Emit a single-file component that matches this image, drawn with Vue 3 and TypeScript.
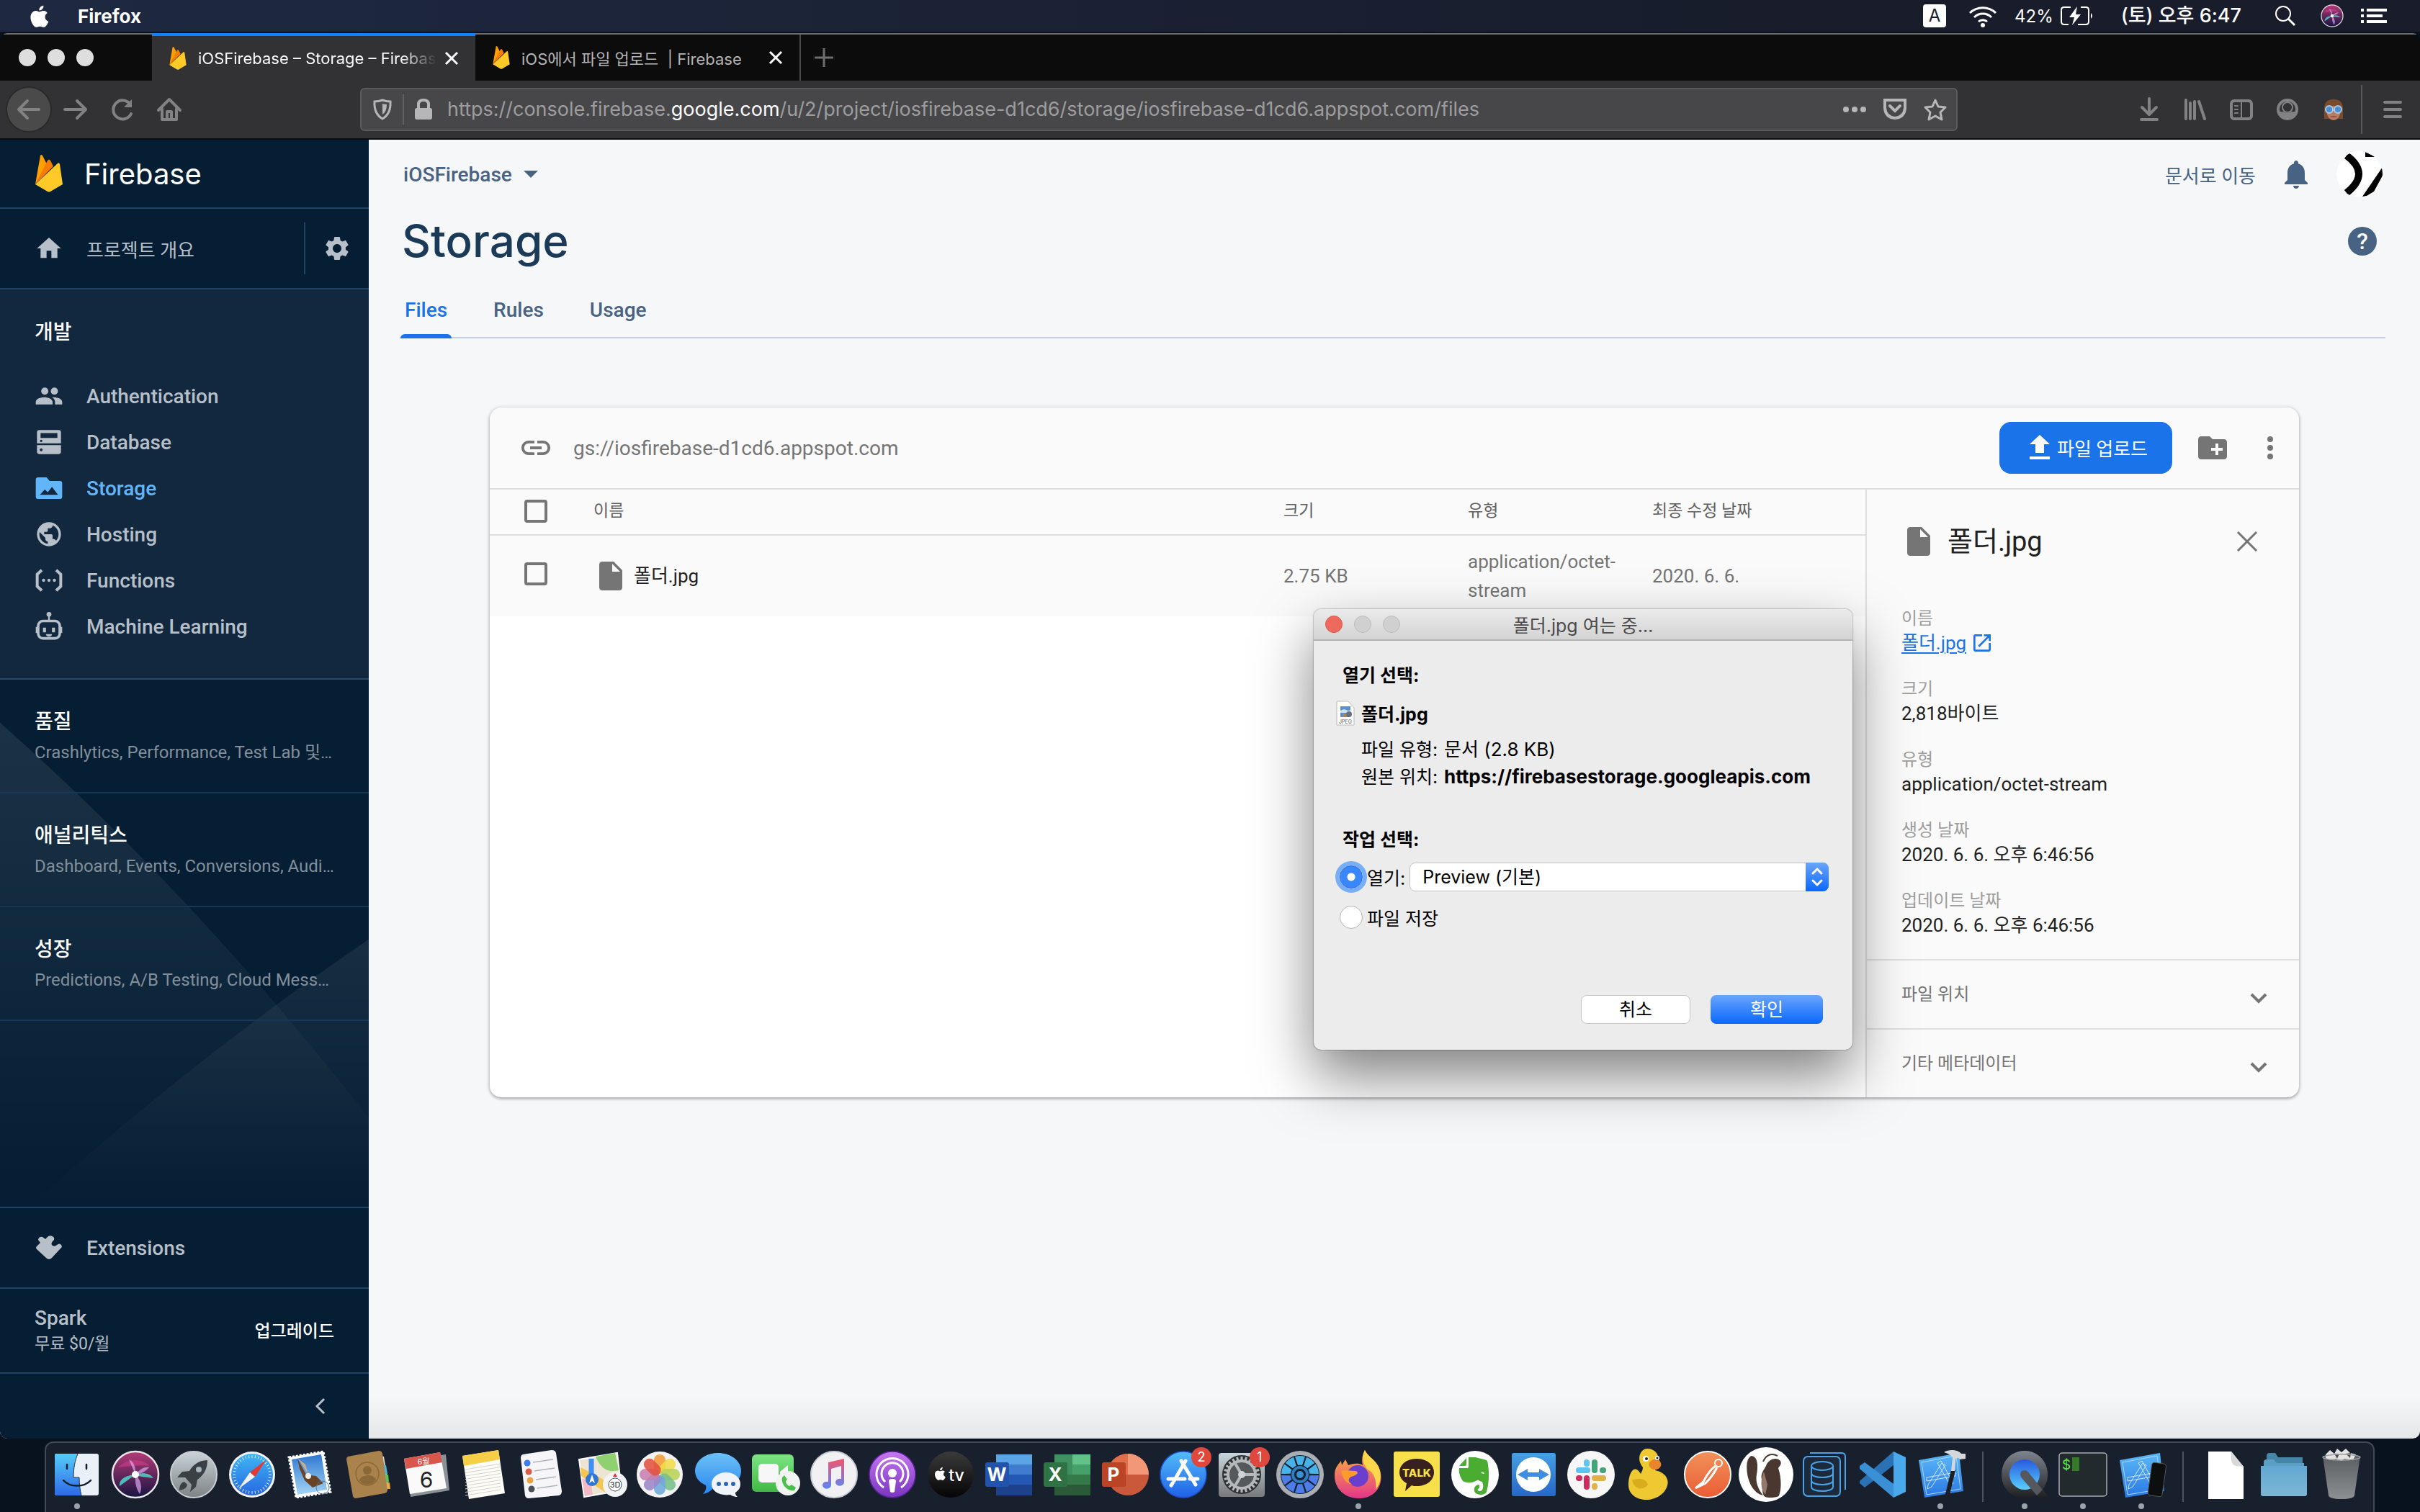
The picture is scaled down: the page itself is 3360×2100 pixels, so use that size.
<script setup lang="ts">
import { ref } from 'vue'

interface NavItem {
  label: string
  icon: string
  active?: boolean
}

interface DockApp {
  name: string
  art: string
  running?: boolean
  badge?: number
}

const navItems: NavItem[] = [
  { label: 'Authentication', icon: '<path d="M16.5 11a3 3 0 1 0 0-6 3 3 0 0 0 0 6zm-8 0a3 3 0 1 0 0-6 3 3 0 0 0 0 6zM8 13c-3 0-7 1.2-7 4v2h14v-2c0-2.8-4-4-7-4zm8 0h-1.5c1.5.9 2.5 2 2.5 4v2h6v-2c0-2.8-4-4-7-4z"/>' },
  { label: 'Database', icon: '<path fill-rule="evenodd" d="M4 2h16a2 2 0 0 1 2 2v9H2V4a2 2 0 0 1 2-2zm1 2.5v4h14v-4zM5.500 10a1 1 0 1 0 0 2 1 1 0 0 0 0-2zM2 14.5h20V20a2 2 0 0 1-2 2H4a2 2 0 0 1-2-2zM5.500 17.300a1.200 1.200 0 1 0 0 2.400 1.200 1.200 0 0 0 0-2.400z"/>' },
  { label: 'Storage', active: true, icon: '<path fill-rule="evenodd" d="M3 3h7l2.500 3H21a2 2 0 0 1 2 2v11a2 2 0 0 1-2 2H3a2 2 0 0 1-2-2V5a2 2 0 0 1 2-2zm1.500 14.500h15L14.500 11l-3.500 4.500L8.500 13z"/>' },
  { label: 'Hosting', icon: '<path d="M12 2C6.480 2 2 6.480 2 12s4.480 10 10 10 10-4.480 10-10S17.520 2 12 2zm-1 17.930c-3.950-.490-7-3.850-7-7.930 0-.620.080-1.210.210-1.790L9 15v1c0 1.100.900 2 2 2v1.930zm6.900-2.540c-.260-.810-1-1.390-1.900-1.390h-1v-3c0-.550-.450-1-1-1H8v-2h2c.550 0 1-.450 1-1V7h2c1.100 0 2-.900 2-2v-.410c2.930 1.190 5 4.060 5 7.410 0 2.080-.800 3.970-2.100 5.390z"/>' },
  { label: 'Functions', icon: '<path d="M6 3.500 2.200 7v10L6 20.500M18 3.500 21.800 7v10L18 20.500" fill="none" stroke="currentColor" stroke-width="2.400"/><circle cx="7.500" cy="12" r="1.300"/><circle cx="12" cy="12" r="1.300"/><circle cx="16.500" cy="12" r="1.300"/>' },
  { label: 'Machine Learning', icon: '<rect x="3" y="7.500" width="18" height="14.500" rx="4" fill="none" stroke="currentColor" stroke-width="2.200"/><path d="M1 12.500h2v5H1zM21 12.500h2v5h-2zM11.300 3h1.400v4h-1.400zM7 13h2.500v4H7zM14.500 13H17v4h-2.500zM9.500 18.500h5a2.500 2 0 0 1-5 0z"/><circle cx="12" cy="2" r="2"/>' },
]

const productGroups = [
  { title: '품질', detail: 'Crashlytics, Performance, Test Lab 및…' },
  { title: '애널리틱스', detail: 'Dashboard, Events, Conversions, Audi…' },
  { title: '성장', detail: 'Predictions, A/B Testing, Cloud Mess…' },
]

const pageTabs = ['Files', 'Rules', 'Usage']
const activeTab = ref('Files')
const openMode = ref('open')

const metadata = [
  { label: '크기', value: '2,818바이트' },
  { label: '유형', value: 'application/octet-stream' },
  { label: '생성 날짜', value: '2020. 6. 6. 오후 6:46:56' },
  { label: '업데이트 날짜', value: '2020. 6. 6. 오후 6:46:56' },
]

const repeat = (count: number, draw: (i: number) => string) =>
  Array.from({ length: count }, (_, i) => draw(i)).join('')

const petals = ['#f29b38', '#f3dc4a', '#b9d25a', '#78c08a', '#6fa8dc', '#9c86c9', '#c87fae', '#e2523f']
const applePath = 'M17 12.500c0-2.200 1.800-3.300 1.900-3.400-1-1.500-2.600-1.700-3.200-1.700-1.400-.100-2.700.800-3.300.800-.700 0-1.800-.800-2.900-.800-1.500 0-2.900.900-3.700 2.200-1.600 2.700-.400 6.800 1.100 9 .800 1.100 1.700 2.300 2.900 2.300 1.100 0 1.600-.700 3-.700s1.800.700 3 .700 2-1.100 2.800-2.200c.900-1.300 1.200-2.500 1.200-2.600-.100 0-2.800-1-2.800-3.600zM14.800 5.900c.600-.800 1-1.800.900-2.900-.900 0-2 .600-2.600 1.300-.600.700-1.100 1.700-.900 2.800 1 .100 2-.500 2.600-1.200z'
const blueprint = '<path d="M4 14 60 4l6 53-54 9z" fill="url(#g-blueprint)"/><path d="M8 17 56 8l6 46-47 8z" fill="none" stroke="#a9d6ff" stroke-width="1"/><path d="m17 48 19-30 5 3-19 30-6 3zM30 18l5-3 17 31-4 3zM15 38l40-7v5l-40 7z" fill="none" stroke="#cfe8ff" stroke-width="1"/>'
const officeTile = (letter: string, color: string) =>
  `<rect x="1" y="17" width="33" height="34" rx="3" fill="${color}"/><text x="17" y="43" font-size="26" font-weight="700" text-anchor="middle" fill="#fff">${letter}</text>`

const mainApps: DockApp[] = [
  { name: 'Finder', running: true, art: '<rect x="3" y="5" width="61" height="58" rx="3" fill="#e9f0f8"/><path d="M6 5h29c-4 10-6 20-6 33h8c0 9 1 17 3 25H6a3 3 0 0 1-3-3V8a3 3 0 0 1 3-3z" fill="url(#g-finder)"/><path d="M35 5c-4 10-6 20-6 33h8c0 9 1 17 3 25" fill="none" stroke="#234" stroke-width="1"/><path d="M20 20v6M47 20v6M15 42c9 10 29 10 38 0" fill="none" stroke="#111c2c" stroke-width="2.500" stroke-linecap="round"/>' },
  { name: 'Siri', art: '<circle cx="34" cy="34" r="32" fill="url(#g-siri)" stroke="#e9e6e8" stroke-width="2.500"/><path d="M10 24c14-14 34-12 44-2-14-2-28 0-44 2z" fill="#e0408f" opacity=".5"/><path d="M34 34 12 50c-1-9 8-15 22-16zM34 34c12-4 21-1 25 5-10-2-18-1-25-5z" fill="#4fe0d0" opacity=".8"/><path d="M34 34 25 13c7 3 10 12 9 21zM34 34c8 8 10 18 6 27-5-7-7-16-6-27zM34 34c6-8 13-11 19-10-4 5-10 9-19 10z" fill="#d8a8ef" opacity=".7"/><circle cx="34" cy="34" r="5" fill="#fff"/>' },
  { name: 'Launchpad', art: '<circle cx="34" cy="34" r="32" fill="url(#g-launch)" stroke="#c8d0d4" stroke-width="2"/><path d="M53 14c-11 0-20 6-25 15l-10 1-7 8h11l9 10-2 10 8-7 2-10c9-6 14-15 14-27z" fill="#3b4045"/><circle cx="41" cy="27" r="4" fill="#a9b4ba"/><path d="M21 44c-5 1-7 6-7 12 6-1 10-3 11-8z" fill="#3b4045"/>' },
  { name: 'Safari', art: `<circle cx="34" cy="34" r="32" fill="#f1f3f5"/><circle cx="34" cy="34" r="29" fill="url(#g-safari)"/>${repeat(36, i => `<path d="M34 7v4" stroke="#d6ecff" stroke-width="1" transform="rotate(${i * 10} 34 34)"/>`)}<path d="m54 13-16 24-7-6z" fill="#e5392f"/><path d="m15 54 16-23 7 6z" fill="#f4f4f4"/>` },
  { name: 'Mail', art: '<path d="m4 10 48-8 10 56-48 8z" fill="#fff" stroke="#fff" stroke-width="3" stroke-dasharray="3 2"/><path d="m8 13 41-7 8 49-41 7z" fill="url(#g-mail)"/><path d="m16 12 12 22 14 2 10 10-15 6-11-10-7-16z" fill="#6a4325"/><path d="m17 12 10 8 4 14z" fill="#c9b08c"/><circle cx="31" cy="36" r="4" fill="#f1eee8"/><circle cx="51" cy="52" r="9" fill="none" stroke="#55799b" stroke-width="1"/>' },
  { name: 'Contacts', art: '<path d="m50 8 5 1 7 44-6 4z" fill="#ddd"/><path d="m54 20 4 1 2 12-4 1z" fill="#4fb7e0"/><path d="m57 34 4 0 1 10-4 1z" fill="#58c757"/><path d="m59 45 4 0 1 9-4 0z" fill="#f0a63a"/><path d="M5 9 48 1q4 0 5 4l7 50q0 4-4 5L16 67q-3 0-4-3L3 13q0-3 2-4z" fill="#a9824c"/><circle cx="32" cy="33" r="16" fill="none" stroke="#8b6838" stroke-width="1.500"/><circle cx="32" cy="28" r="6" fill="#8b6838"/><path d="M21 42c2-9 20-9 23-1-6 9-18 9-23 1z" fill="#8b6838"/>' },
  { name: 'Calendar', art: '<path d="m8 14 53-8 5 50-54 9z" fill="#8c9196"/><path d="m3 12 50-9 9 50-51 8z" fill="#fafafa"/><path d="m3 12 50-9 3 14-50 9z" fill="#d9564d"/><text x="30" y="20" font-size="11" fill="#fff" text-anchor="middle">6월</text><text x="34" y="52" font-size="30" fill="#222" text-anchor="middle">6</text>' },
  { name: 'Notes', art: `<path d="m3 8 50-8 9 60-50 8z" fill="#fdfcf6"/><path d="m3 8 50-8 2 13-50 9z" fill="#f6cf46"/>${repeat(9, i => `<path d="m7 ${27 + i * 4.5} 49-8" stroke="#d5d5d0" stroke-width="1"/>`)}` },
  { name: 'Reminders', art: `<path d="M6 6 46 0q5 0 6 4l8 53q0 5-4 6L14 67q-4 0-5-4L3 11q0-4 3-5z" fill="#f6f6f8"/>${['#3b7cf0', '#dd5a4a', '#eca347', '#4b5158'].map((c, i) => `<circle cx="${12 + i * 2}" cy="${18 + i * 12}" r="4.500" fill="${c}"/><path d="m${20 + i * 2} ${17 + i * 12} 28-4" stroke="#b0b3b7" stroke-width="1.500"/>`).join('')}` },
  { name: 'Maps', art: '<path d="m3 13 53-9 6 52-52 9z" fill="#ece5d4" stroke="#fff" stroke-width="2"/><path d="m26 9 27-5 5 24c-16 4-25-3-32-19z" fill="#8fd071"/><path d="m5 24 20 10 36 22-20 4L6 36z" fill="#f6c650"/><path d="m7 40 12 2 3 20-11 2z" fill="#f3b9c4"/><path d="M20 12v34" stroke="#3f8df5" stroke-width="7"/><circle cx="21" cy="41" r="9" fill="#2d76d8"/><path d="m21 34 4 12-4-3-4 3z" fill="#fff"/><circle cx="53" cy="48" r="17" fill="#f2f3f5"/><circle cx="53" cy="48" r="9" fill="#fff" stroke="#456" stroke-width="1"/><path d="m53 32 3 5h-6z" fill="#d33"/><text x="53" y="52" font-size="11" fill="#333" text-anchor="middle">3D</text>' },
  { name: 'Photos', art: `<circle cx="34" cy="34" r="32" fill="#f3f3f1"/>${petals.map((c, i) => `<rect x="26" y="6" width="16" height="27" rx="8" fill="${c}" opacity=".88" transform="rotate(${i * 45} 34 34)"/>`).join('')}` },
  { name: 'Messages', art: '<path d="M34 4c18 0 32 11 32 25S52 54 34 54c-3 0-5 0-7-1-3 4-8 7-14 8 4-4 5-8 4-12C8 45 2 38 2 29 2 15 16 4 34 4z" fill="url(#g-msg)"/><path d="M45 31c11 0 20 7 20 16 0 5-2 9-7 12 0 3 1 4 3 6-4 0-7-1-10-3-14 2-26-4-26-15 0-9 9-16 20-16z" fill="#eef4f9"/><circle cx="35" cy="47" r="3" fill="#2d66b5"/><circle cx="45" cy="47" r="3" fill="#2d66b5"/><circle cx="55" cy="47" r="3" fill="#2d66b5"/>' },
  { name: 'FaceTime', art: '<rect x="0" y="6" width="58" height="52" rx="6" fill="url(#g-green)"/><rect x="9" y="19" width="28" height="26" rx="5" fill="#f7f7f7"/><path d="m39 30 11-9v26l-11-8z" fill="#f7f7f7"/><circle cx="50" cy="46" r="17" fill="#f0f3ef"/><path d="M42 38c-2 10 8 20 17 18l2-4-6-4-3 2c-3-1-5-4-5-7l2-2-4-6z" fill="#49c04b"/>' },
  { name: 'Music', art: '<circle cx="34" cy="34" r="32" fill="#f1f1f4" stroke="#c9cdd3" stroke-width="2"/><path d="M26 17 48 12v33a6 5 0 1 1-4-5V22l-14 4v23a6 5 0 1 1-4-5z" fill="url(#g-music)"/>' },
  { name: 'Podcasts', art: '<circle cx="34" cy="34" r="32" fill="url(#g-podcast)" stroke="#5a229b" stroke-width="1.500"/><circle cx="34" cy="32" r="6" fill="#fff"/><path d="M29 43q0-3 5-3t5 3l-2 15q-3 2-6 0z" fill="#fff"/><path d="M24 44a15 15 0 1 1 20 0M22 52a22 22 0 1 1 24 0" fill="none" stroke="#fff" stroke-width="3"/>' },
  { name: 'TV', art: `<circle cx="34" cy="34" r="32" fill="url(#g-tv)"/><path d="${applePath}" transform="translate(7 21)" fill="#fff"/><text x="42" y="43" font-size="23" font-weight="500" fill="#fff" text-anchor="middle">tv</text>` },
  { name: 'Word', art: `<path d="M16 6h50v15H16z" fill="#5ba4e6"/><path d="M16 20h50v15H16z" fill="#3f7ccd"/><path d="M16 34h50v15H16z" fill="#2458b5"/><path d="M16 48h50v15H16z" fill="#1d418b"/>${officeTile('W', '#2354ad')}` },
  { name: 'Excel', art: `<path d="M16 6h25v29H16z" fill="#3f9161"/><path d="M41 6h25v15H41z" fill="#62c387"/><path d="M41 20h25v15H41z" fill="#45a06a"/><path d="M16 34h50v15H16z" fill="#347a49"/><path d="M16 48h50v15H16z" fill="#2b5a38"/>${officeTile('X', '#2f7244')}` },
  { name: 'PowerPoint', art: `<circle cx="37" cy="34" r="29" fill="#c9593a"/><path d="M37 5a29 29 0 0 1 29 29H37z" fill="#f29878"/><path d="M37 5v29H8A29 29 0 0 1 37 5z" fill="#e0704c"/>${officeTile('P', '#bb4426')}` },
  { name: 'App Store', badge: 2, art: '<circle cx="34" cy="34" r="32" fill="url(#g-store)" stroke="#1d4fd0" stroke-width="1.500"/><path d="m37 15-16 28M31 15l20 33M13 40h23M43 40h11M17 49l2-3" stroke="#fff" stroke-width="5" stroke-linecap="round"/>' },
  { name: 'System Preferences', badge: 1, art: `<rect x="2" y="4" width="64" height="61" rx="4" fill="url(#g-prefs)"/><circle cx="34" cy="34" r="27" fill="#2f3235"/>${repeat(24, i => `<path d="M32.500 9h3v5h-3z" fill="#b5b9bb" transform="rotate(${i * 15} 34 34)"/>`)}<circle cx="34" cy="34" r="19" fill="#55595c" stroke="#b5b9bb" stroke-width="4"/><path d="M34 34 24 17M34 34h20M34 34 24 51" stroke="#b5b9bb" stroke-width="4"/><circle cx="34" cy="34" r="5" fill="#d0d3d5"/>` },
  { name: 'Utility', art: `<circle cx="34" cy="34" r="33" fill="#a9aeb4"/><circle cx="34" cy="34" r="27" fill="#14202e"/>${repeat(10, i => `<path d="M27 9a26 26 0 0 1 14 0l-4 12a13 13 0 0 0-6 0z" fill="${i < 3 || i > 7 ? '#46b4e8' : '#4c7de8'}" transform="rotate(${i * 36} 34 34)"/>`)}<circle cx="34" cy="34" r="10" fill="none" stroke="#2f7cc0" stroke-width="4"/><circle cx="34" cy="34" r="5" fill="#3a8fd5"/>` },
  { name: 'Firefox', running: true, art: '<path d="M43 0c3 8 14 13 19 23 9 18 1 44-28 44C12 67 0 50 1 34c0-9 5-14 9-19l1 6 5-8 4 8c8-3 16-3 20 0-2-8 0-16 3-21z" fill="url(#g-fox)"/><circle cx="33" cy="36" r="15" fill="#6a3fce"/><path d="M43 0c3 8 14 13 19 23 5 12 3 24-4 32 2-14-3-24-11-28-7-7-8-18-4-27z" fill="#fcd64b"/><path d="M10 29c8-2 12 0 20 0 6 2 2 6-6 8-6 3-3 9 2 11-9-1-14-9-16-19z" fill="#fb9b2c"/>' },
  { name: 'KakaoTalk', art: '<rect x="2" y="2" width="64" height="63" rx="3" fill="#f8e04a"/><path d="M34 12c14 0 24 8 24 19S48 50 34 50c-3 0-5 0-7-1l-9 8 2-11c-6-3-10-9-10-15 0-11 10-19 24-19z" fill="#38201e"/><text x="34" y="37" font-size="15" font-weight="800" text-anchor="middle" fill="#f8e04a">TALK</text>' },
  { name: 'Evernote', art: '<circle cx="34" cy="34" r="33" fill="#fff"/><path d="M25 10h10c6 2 12 2 16 5 3 14 3 28-1 43-2 5-12 5-16 1-3-5 0-11 6-11v5c-3 0-3 4 0 4 6 0 6-8 4-13-5-1-5-4-9-1-6 3-13 3-18 0-4-6-6-12-5-18h11c2 0 2-1 2-3z" fill="#4aad32"/><path d="m12 22 10-11v9q0 2-2 2z" fill="#4aad32"/><path d="M42 32c2-2 4-2 5 1z" fill="#fff"/>' },
  { name: 'TeamViewer', art: '<rect x="4" y="4" width="61" height="60" rx="3" fill="url(#g-team)"/><circle cx="34" cy="34" r="24" fill="#fff"/><path d="m12 34 14-8v5h16v-5l14 8-14 8v-5H26v5z" fill="#3f8de0"/>' },
  { name: 'Slack', art: '<circle cx="34" cy="34" r="33" fill="#f7f7f7"/><g stroke-width="8" stroke-linecap="round" fill="none"><path d="M17 28h12" stroke="#5ec4ec"/><path d="M28 17v2" stroke="#5ec4ec"/><path d="M39 17v11" stroke="#44a678"/><path d="M50 28h1" stroke="#44a678"/><path d="M39 39h12" stroke="#e2b04a"/><path d="M39 50v1" stroke="#e2b04a"/><path d="M28 39v12" stroke="#cd2c5d"/><path d="M17 39h1" stroke="#cd2c5d"/></g>' },
  { name: 'Cyberduck', art: '<path d="M12 27c4-2 8 2 10 6 2-4 3-6 3-9-10-12-3-26 6-26 11 0 16 8 16 16 0 6-4 10-5 14 12 2 20 11 17 21-3 12-16 20-29 20S5 62 5 48c0-8 2-17 7-21z" fill="#efc932"/><path d="M10 42c10-4 20-2 22 6-6 8-18 8-22-6z" fill="#d9ac20"/><path d="M34 17c6-6 12-6 15-1 4 6-2 12-8 11-4 0-9-4-7-10z" fill="#e9842b"/><circle cx="29" cy="12" r="4" fill="#fff"/><circle cx="45" cy="11" r="3" fill="#fff"/><circle cx="30" cy="12" r="2" fill="#222"/><circle cx="45" cy="11" r="1.500" fill="#222"/>' },
  { name: 'Postman', art: '<circle cx="34" cy="34" r="32" fill="url(#g-post)" stroke="#fff" stroke-width="2"/><circle cx="49" cy="18" r="5" fill="none" stroke="#fff" stroke-width="2"/><path d="M45 22c-8 5-13 14-17 22l-11 9 14-7c6-6 12-14 16-22" fill="none" stroke="#fff" stroke-width="3"/>' },
  { name: 'DBeaver', art: '<circle cx="34" cy="34" r="38" fill="#fff"/><path d="M34 22c2-8 14-14 20-7 2 5-1 7-3 10 4 12 5 28 1 38 0 3-15 4-19 2-5-2-4-16-5-24-2-8 3-13 6-19z" fill="#4a3830"/><path d="M14 8c9 1 9 15 7 26-2 10 2 20 9 29-13-3-20-17-22-30C6 20 8 10 14 8z" fill="#4a3830"/><path d="M31 30c-5 12-5 24 2 32l3-14z" fill="#94796a"/><path d="M30 16c4-10 12-12 20-8" fill="none" stroke="#4a3830" stroke-width="2"/>' },
  { name: 'Database Viewer', art: '<path d="M14 4h44q5 0 5 5v46" fill="none" stroke="#4aa3e8" stroke-width="2"/><rect x="5" y="9" width="51" height="55" rx="6" fill="#1c2a3c" stroke="#4aa3e8" stroke-width="2"/><ellipse cx="31" cy="22" rx="15" ry="6" fill="none" stroke="#4aa3e8" stroke-width="2"/><path d="M16 22v29c0 8 30 8 30 0V22M16 32c0 8 30 8 30 0M16 42c0 8 30 8 30 0" fill="none" stroke="#4aa3e8" stroke-width="2"/>' },
  { name: 'Visual Studio Code', art: '<path d="m49 2 17 8v48l-17 8z" fill="#4aa9ea"/><path d="M49 2v19L9 52l-7-6v-3z" fill="#2b72b5"/><path d="M49 66V47L9 17l-7 5v4z" fill="#3a8fd5"/>' },
  { name: 'Xcode', running: true, art: `${blueprint}<path d="M49 28h6l-9 38q-4 2-6-1z" fill="#1d1f22"/><path d="M39 3c8-5 20-3 24 2l6 0v7l-8 1c-2-3-5-3-6 0l-1 16h-5l2-18c-2-4-6-6-12-8z" fill="#d5d8db"/>` },
]

const recentApps: DockApp[] = [
  { name: 'QuickTime Player', running: true, art: '<path fill-rule="evenodd" d="M34 1c18 0 32 14 32 33 0 9-3 16-7 21l7 8v4H55l-6-4c-5 3-10 4-15 4C16 67 2 53 2 34S16 1 34 1z" fill="url(#g-quick)"/><circle cx="34" cy="34" r="21" fill="url(#g-quickblue)"/><path d="M28 34q0-6 6-6 4 0 7 5l18 22-8 8-20-23q-3-3-3-6z" fill="#55585d"/>' },
  { name: 'iTerm', running: true, art: '<rect x="1" y="4" width="66" height="60" rx="4" fill="#232a2d" stroke="#a5abb0" stroke-width="1.500"/><text x="5" y="27" font-size="19" fill="#5fe64a">$</text><path d="M19 10h10v19H19z" fill="#37792a"/>' },
  { name: 'Simulator', running: true, art: `${blueprint}<rect x="46" y="18" width="20" height="46" rx="4" fill="#0d0e10" stroke="#555" stroke-width="1" transform="rotate(8 56 40)"/>` },
]

const dockFiles: DockApp[] = [
  { name: 'Document', art: '<path d="M10 2h32l17 21v45H10z" fill="#fff"/><path d="M42 2v12q0 6 6 8l11 1z" fill="#d9d9d9"/>' },
  { name: 'Folder', art: '<path d="M10 8q0-4 4-4h8l4 6h34v20H10z" fill="#4585a8"/><path d="M6 17q0-4 4-4h10l4 5h38v20H6z" fill="#5b9fc4"/><path d="M2 22h64v39q0 3-3 3H5q-3 0-3-3z" fill="url(#g-folder)"/>' },
  { name: 'Trash', art: '<path d="M8 8h52l-8 55q-1 5-18 5t-18-5z" fill="url(#g-trash)"/><path d="m12 6 6-6 6 5 4-7 6 5 6-5 6 6 8 2-4 8-12-2-4 3-8-3-8 2-6-3z" fill="#e3e3e3"/><path d="m24 5 4 7 3-7zM40 5l6 6 1-7z" fill="#544a44"/><ellipse cx="34" cy="10" rx="26" ry="4" fill="none" stroke="#9da1a4" stroke-width="1.500"/>' },
]

const gradients = [
  ['g-finder', '#56cdf8', '#2d6ae8'], ['g-siri', '#b53a78', '#161440'], ['g-launch', '#c9d3d8', '#7d8285'],
  ['g-safari', '#3fb6f4', '#2767e0'], ['g-mail', '#2f78d2', '#a5d5f4'], ['g-msg', '#6cc1f7', '#2a86ef'],
  ['g-green', '#7ce583', '#41b845'], ['g-music', '#f3546c', '#5b86f5'], ['g-podcast', '#c676f0', '#7a36c0'],
  ['g-tv', '#3a3a3a', '#050505'], ['g-store', '#53bdf8', '#1f60e8'], ['g-prefs', '#c8d6dc', '#77797b'],
  ['g-fox', '#fdb836', '#e3358b'], ['g-team', '#46a0e4', '#2767c8'], ['g-post', '#f2925a', '#ea5c34'],
  ['g-quick', '#7f858f', '#1d1e20'], ['g-quickblue', '#2858e0', '#57d0fb'], ['g-folder', '#62a8d2', '#7db6d4'],
  ['g-trash', '#5b5e60', '#8c9092'], ['g-blueprint', '#5cb8f7', '#2a78e4'],
]
</script>

<template>
  <div class="desktop">
    <svg class="defs" width="0" height="0" aria-hidden="true">
      <defs>
        <linearGradient v-for="g in gradients" :id="g[0]" :key="g[0]" x1="0" y1="0" x2="0" y2="1">
          <stop offset="0" :stop-color="g[1]" />
          <stop offset="1" :stop-color="g[2]" />
        </linearGradient>
        <symbol id="flame" viewBox="0 0 38 52">
          <path d="M0 41 7 1q1-2 3 0l6 12z" fill="#ffa000" />
          <path d="M0 41 17 8q2-3 4 0l4 8z" fill="#f57c00" />
          <path d="M0 41 31 12q2-2 3 1l4 28-17 10q-2 1-4 0z" fill="#ffca28" />
        </symbol>
        <symbol id="file" viewBox="0 0 24 24">
          <path d="M6 2c-1.100 0-2 .900-2 2v16c0 1.100.900 2 2 2h12c1.100 0 2-.900 2-2V8l-6-6zm7 7V3.500L18.500 9z" fill="currentColor" />
        </symbol>
      </defs>
    </svg>

    <header class="menubar">
      <div class="menu-left">
        <svg class="apple" viewBox="5 2 15 19"><path :d="applePath" fill="#fff" /></svg>
        <strong>Firefox</strong>
      </div>
      <div class="menu-right">
        <span class="input-source">A</span>
        <svg class="wifi" viewBox="0 0 40 30">
          <path d="M2 11a26 26 0 0 1 36 0M8 17a17 17 0 0 1 24 0M14 23a9 9 0 0 1 12 0" fill="none" stroke="#fff" stroke-width="3" />
          <circle cx="20" cy="28" r="3" fill="#fff" />
        </svg>
        <span class="percent">42%</span>
        <svg class="battery" viewBox="0 0 46 26">
          <path d="M14 1H5Q1 1 1 5v16q0 4 4 4h6M28 1h7q4 0 4 4v16q0 4-4 4H24" fill="none" stroke="#fff" stroke-width="2" />
          <path d="M23 0 12 15h7l-3 11 12-15h-7z" fill="#fff" /><path d="M42 9q4 4 0 8z" fill="#fff" />
        </svg>
        <span class="clock">(토) 오후 6:47</span>
        <svg class="spotlight" viewBox="0 0 30 30"><circle cx="12" cy="12" r="10" fill="none" stroke="#fff" stroke-width="2" /><path d="m19 19 9 9" stroke="#fff" stroke-width="3" /></svg>
        <svg class="siri" viewBox="0 0 68 68" v-html="mainApps[1].art"></svg>
        <svg class="list" viewBox="0 0 36 20"><path d="M0 0h4v4H0zM8 0h28v4H8zM0 8h4v4H0zM8 8h22v4H8zM0 16h4v4H0zM8 16h28v4H8z" fill="#fff" /></svg>
      </div>
    </header>

    <div class="window">
      <div class="tabstrip">
        <div class="lights"><i></i><i></i><i></i></div>
        <div class="browser-tab current">
          <svg class="favicon"><use href="#flame" /></svg>
          <span class="tab-title">iOSFirebase – Storage – Firebase</span>
          <button class="tab-close" aria-label="Close tab"><svg viewBox="0 0 18 18"><path d="m1 1 16 16M17 1 1 17" /></svg></button>
        </div>
        <div class="browser-tab">
          <svg class="favicon"><use href="#flame" /></svg>
          <span class="tab-title">iOS에서 파일 업로드 &nbsp;| Firebase</span>
          <button class="tab-close" aria-label="Close tab"><svg viewBox="0 0 18 18"><path d="m1 1 16 16M17 1 1 17" /></svg></button>
        </div>
        <button class="new-tab" aria-label="New tab"><svg viewBox="0 0 28 28"><path d="M14 1v26M1 14h26" /></svg></button>
      </div>

      <div class="toolbar">
        <div class="nav-buttons">
          <button class="back" aria-label="Back"><svg viewBox="0 0 32 32"><path d="M30 16H3M14 4 2 16l12 12" /></svg></button>
          <button aria-label="Forward"><svg viewBox="0 0 32 32"><path d="M1 16h28M18 4l12 12-12 12" /></svg></button>
          <button aria-label="Reload"><svg viewBox="0 0 32 32"><path d="M28 22a13 13 0 1 1-1-13" /><path d="M29 2v11H18z" class="solid" /></svg></button>
          <button aria-label="Home"><svg viewBox="0 0 32 32"><path d="M1 17 16 2l15 15M6 15v15h20V15M13 30V19h6v11" /></svg></button>
        </div>
        <div class="urlbar">
          <svg class="shield" viewBox="0 0 26 30"><path d="M2 4q6 0 11-2 5 2 11 2 1 17-11 24Q1 21 2 4z" fill="none" stroke="#b6b6b8" stroke-width="3" /><path d="M13 7q3 1 6 1 0 10-6 14z" fill="#b6b6b8" /></svg>
          <span class="url-divider"></span>
          <svg class="lock" viewBox="0 0 26 30"><path d="M6 14V8q0-6 7-6t7 6v6" fill="none" stroke="#b6b6b8" stroke-width="4" /><rect x="1" y="13" width="24" height="16" rx="3" fill="#b6b6b8" /></svg>
          <div class="url" role="textbox" aria-label="Address">https://console.firebase.<b>google.com</b>/u/2/project/iosfirebase-d1cd6/storage/iosfirebase-d1cd6.appspot.com/files</div>
          <svg class="url-icon" viewBox="0 0 34 32"><circle cx="5" cy="16" r="4" fill="#b6b6b8" /><circle cx="17" cy="16" r="4" fill="#b6b6b8" /><circle cx="29" cy="16" r="4" fill="#b6b6b8" /></svg>
          <svg class="url-icon" viewBox="0 0 34 32"><path d="M3 3h28v11q-1 13-14 14Q4 27 3 14z" fill="none" stroke="#b6b6b8" stroke-width="4" /><path d="m10 11 7 7 7-7" fill="none" stroke="#b6b6b8" stroke-width="4" stroke-linecap="round" /></svg>
          <svg class="url-icon" viewBox="0 0 34 32"><path d="m17 3 4 9 10 1-7 7 2 10-9-5-9 5 2-10-7-7 10-1z" fill="none" stroke="#b6b6b8" stroke-width="3" stroke-linejoin="round" /></svg>
        </div>
        <div class="tool-buttons">
          <button aria-label="Downloads"><svg viewBox="0 0 32 32"><path d="M16 1v21M6 13l10 10 10-10M5 30h22" /></svg></button>
          <button aria-label="Library"><svg viewBox="0 0 32 32"><path d="M3 3v26M9 7v22M15 5v24M21 5l8 24" /></svg></button>
          <button aria-label="Sidebar"><svg viewBox="0 0 32 32"><rect x="2" y="4" width="28" height="25" rx="4" /><path d="M16 4v25" stroke-width="2" /><path d="M7 11h4M7 16h4M7 21h4" stroke-width="2" /></svg></button>
          <button aria-label="Account"><svg viewBox="0 0 32 32"><circle cx="16" cy="16" r="13" /><path class="solid" d="M4 18q3 2 6 1 6 4 12 0 3 1 6-1-2 11-12 11T4 18z" /><circle cx="16" cy="13" r="7" stroke-width="2" /></svg></button>
          <button aria-label="Extension">
            <svg viewBox="0 0 32 32" class="face"><path d="M3 29V13Q4 2 16 2t13 11v16z" fill="#7a4c2e" /><path d="M7 14q9-6 18 0v9q-3 8-9 8t-9-8z" fill="#b97e62" /><circle cx="10" cy="16" r="5" fill="#4b8fd0" stroke="#a9c8e4" stroke-width="2" /><circle cx="22" cy="16" r="5" fill="#4b8fd0" stroke="#a9c8e4" stroke-width="2" /><path d="M13 26h6" stroke="#9c4f44" stroke-width="2" /></svg>
          </button>
          <span class="tool-divider"></span>
          <button aria-label="Menu"><svg viewBox="0 0 32 32"><path d="M5 6h22M5 16h22M5 26h22" /></svg></button>
        </div>
      </div>

      <div class="page">
        <aside class="sidebar">
          <a class="brand" href="#"><svg class="brand-logo"><use href="#flame" /></svg><span>Firebase</span></a>
          <div class="overview">
            <a href="#"><svg class="icon" viewBox="0 0 24 24"><path d="M10 20v-6h4v6h5v-8h3L12 3 2 12h3v8z" /></svg><span>프로젝트 개요</span></a>
            <button class="settings" aria-label="Settings">
              <svg class="icon" viewBox="0 0 24 24"><path d="M19.140 12.940c.040-.300.060-.610.060-.940 0-.320-.020-.640-.070-.940l2.030-1.580c.180-.140.230-.410.120-.610l-1.920-3.320c-.120-.220-.370-.290-.590-.220l-2.390.960c-.500-.380-1.030-.700-1.620-.940L14.400 2.810c-.040-.240-.240-.410-.480-.410h-3.840c-.240 0-.430.170-.470.410L9.250 5.350C8.660 5.590 8.120 5.920 7.630 6.290L5.240 5.330c-.220-.080-.470 0-.590.220L2.740 8.870c-.120.210-.080.470.120.610l2.030 1.580c-.050.300-.090.630-.090.940s.020.640.070.940l-2.030 1.580c-.180.140-.230.410-.120.610l1.920 3.320c.120.220.370.290.590.220l2.390-.960c.500.380 1.030.700 1.620.940l.360 2.540c.050.240.240.410.480.410h3.840c.240 0 .440-.170.470-.410l.360-2.540c.590-.240 1.130-.560 1.620-.940l2.390.960c.220.080.470 0 .590-.220l1.920-3.320c.120-.220.070-.470-.120-.610zM12 15.600c-1.980 0-3.600-1.620-3.600-3.600s1.620-3.600 3.600-3.600 3.600 1.620 3.600 3.600-1.620 3.600-3.600 3.600z" /></svg>
            </button>
          </div>
          <nav class="develop">
            <h2>개발</h2>
            <a v-for="item in navItems" :key="item.label" href="#" :class="{ active: item.active }">
              <svg class="icon" viewBox="0 0 24 24" v-html="item.icon"></svg><span>{{ item.label }}</span>
            </a>
          </nav>
          <div class="products">
            <svg class="backdrop" viewBox="0 0 512 735" preserveAspectRatio="none" aria-hidden="true">
              <defs>
                <linearGradient id="beam" x1="0" y1="60" x2="0" y2="700" gradientUnits="userSpaceOnUse"><stop offset="0" stop-color="#fff" stop-opacity=".09" /><stop offset="1" stop-color="#fff" stop-opacity="0" /></linearGradient>
                <linearGradient id="beam2" x1="0" y1="362" x2="0" y2="735" gradientUnits="userSpaceOnUse"><stop offset="0" stop-color="#fff" stop-opacity=".07" /><stop offset="1" stop-color="#fff" stop-opacity="0" /></linearGradient>
              </defs>
              <path d="M0 60Q270 300 512 611v124H0z" fill="url(#beam)" />
              <path d="M512 362Q280 520 40 735h472z" fill="url(#beam2)" />
            </svg>
            <a v-for="group in productGroups" :key="group.title" href="#" class="product">
              <strong>{{ group.title }}</strong><span>{{ group.detail }}</span>
            </a>
          </div>
          <a class="extensions" href="#">
            <svg class="icon" viewBox="-2 -3 40 40"><path d="M1 15l5-5-3-4q1-5 6-4l4 3 4-4q5-2 8 2 1 3-2 5-3 4 0 6t6-1q4-3 6 0 2 3-1 5L22 31q-4 4-8 0L1 19q-2-2 0-4z" /></svg>
            <span>Extensions</span>
          </a>
          <div class="plan">
            <div><strong>Spark</strong><span>무료 $0/월</span></div>
            <button>업그레이드</button>
          </div>
          <div class="collapse">
            <button aria-label="Collapse"><svg viewBox="0 0 16 24"><path d="M14 2 4 12l10 10" fill="none" stroke="currentColor" stroke-width="3" /></svg></button>
          </div>
        </aside>

        <main class="content">
          <div class="topbar">
            <button class="project">iOSFirebase<svg viewBox="0 0 20 10"><path d="M0 0h20L10 10z" fill="currentColor" /></svg></button>
            <div class="account">
              <a href="#">문서로 이동</a>
              <svg class="bell" viewBox="4 2 16 20"><path d="M12 22c1.100 0 2-.900 2-2h-4c0 1.100.890 2 2 2zm6-6v-5c0-3.070-1.640-5.640-4.500-6.320V4c0-.830-.670-1.500-1.500-1.500s-1.500.670-1.500 1.500v.680C7.630 5.360 6 7.920 6 11v5l-2 2v1h16v-1z" fill="currentColor" /></svg>
              <svg class="avatar" viewBox="0 0 64 64"><circle cx="32" cy="32" r="32" fill="#fff" /><path d="M14 6q34 25 0 52" fill="none" stroke="#000" stroke-width="10" /><path d="m64 22v12L52 56l-10 6-6 1zM40 1l14 7H40z" /></svg>
            </div>
          </div>
          <div class="title-row">
            <h1>Storage</h1>
            <button class="help" aria-label="Help">?</button>
          </div>
          <nav class="page-tabs">
            <button v-for="tab in pageTabs" :key="tab" :class="{ selected: tab === activeTab }" @click="activeTab = tab">{{ tab }}</button>
          </nav>

          <section class="card">
            <div class="card-head">
              <svg class="link-icon" viewBox="2 7 20 10"><path d="M3.900 12c0-1.710 1.390-3.100 3.100-3.100h4V7H7c-2.760 0-5 2.240-5 5s2.240 5 5 5h4v-1.900H7c-1.710 0-3.100-1.390-3.100-3.100zM8 13h8v-2H8v2zm9-6h-4v1.900h4c1.710 0 3.100 1.390 3.100 3.100s-1.390 3.100-3.100 3.100h-4V17h4c2.760 0 5-2.240 5-5s-2.240-5-5-5z" fill="currentColor" /></svg>
              <span class="bucket">gs://iosfirebase-d1cd6.appspot.com</span>
              <button class="upload"><svg viewBox="0 0 28 34"><path d="M14 0 0 13h8v12h12V13h8zM0 30h28v4H0z" fill="currentColor" /></svg>파일 업로드</button>
              <button class="plain" aria-label="New folder"><svg class="folder-plus" viewBox="2 4 20 16"><path d="M20 6h-8l-2-2H4c-1.110 0-1.990.890-1.990 2L2 18c0 1.110.890 2 2 2h16c1.110 0 2-.890 2-2V8c0-1.110-.890-2-2-2zm-1 8h-3v3h-2v-3h-3v-2h3V9h2v3h3v2z" fill="currentColor" /></svg></button>
              <button class="plain" aria-label="More"><svg class="dots" viewBox="0 0 8 32"><circle cx="4" cy="4" r="4" fill="currentColor" /><circle cx="4" cy="16" r="4" fill="currentColor" /><circle cx="4" cy="28" r="4" fill="currentColor" /></svg></button>
            </div>
            <div class="card-body">
              <div class="listing">
                <table>
                  <colgroup><col class="c-check"><col><col class="c-mid"><col class="c-mid"><col class="c-date"></colgroup>
                  <thead>
                    <tr><th><input type="checkbox" aria-label="Select all"></th><th>이름</th><th>크기</th><th>유형</th><th>최종 수정 날짜</th></tr>
                  </thead>
                  <tbody>
                    <tr>
                      <td><input type="checkbox" aria-label="폴더.jpg"></td>
                      <td class="name"><span><svg class="file-icon"><use href="#file" /></svg>폴더.jpg</span></td>
                      <td>2.75 KB</td><td>application/octet-stream</td><td>2020. 6. 6.</td>
                    </tr>
                  </tbody>
                </table>
              </div>
              <aside class="detail">
                <div class="detail-title">
                  <svg class="file-icon"><use href="#file" /></svg>
                  <h2>폴더.jpg</h2>
                  <button class="plain" aria-label="Close"><svg class="close" viewBox="0 0 28 28"><path d="m1 1 26 26M27 1 1 27" stroke="currentColor" stroke-width="3" /></svg></button>
                </div>
                <dl>
                  <div>
                    <dt>이름</dt>
                    <dd class="file-link"><a href="#">폴더.jpg</a><svg viewBox="3 3 18 18"><path d="M19 19H5V5h7V3H5c-1.110 0-2 .900-2 2v14c0 1.100.890 2 2 2h14c1.100 0 2-.900 2-2v-7h-2v7zM14 3v2h3.590l-9.830 9.830 1.410 1.410L19 6.410V10h2V3h-7z" fill="currentColor" /></svg></dd>
                  </div>
                  <div v-for="field in metadata" :key="field.label"><dt>{{ field.label }}</dt><dd>{{ field.value }}</dd></div>
                </dl>
                <button v-for="label in ['파일 위치', '기타 메타데이터']" :key="label" class="expander">
                  {{ label }}<svg viewBox="0 0 24 16"><path d="m2 3 10 10L22 3" fill="none" stroke="currentColor" stroke-width="4" /></svg>
                </button>
              </aside>
            </div>
          </section>
        </main>
      </div>
    </div>

    <form class="dialog" @submit.prevent>
      <div class="dialog-bar">
        <div class="dialog-lights"><i class="red"></i><i></i><i></i></div>
        <span>폴더.jpg 여는 중…</span>
      </div>
      <div class="dialog-body">
        <h3>열기 선택:</h3>
        <div class="dialog-file">
          <svg viewBox="0 0 24 34"><path d="M0 1h16l8 9v24H0z" fill="#fff" stroke="#bbb" stroke-width="1" /><path d="M5 8h14v12l-14 3z" fill="#5a8fd0" /><path d="M5 14q5-3 8-1t6 0v4H5z" fill="#cfe0f2" /><path d="m5 23 7-5 7 5z" fill="#a8854c" /><circle cx="17" cy="19" r="4" fill="#66707b" /><text x="12" y="32" font-size="7" text-anchor="middle" fill="#555">JPEG</text></svg>
          <strong>폴더.jpg</strong>
        </div>
        <div class="facts">
          <span>파일 유형:</span><span class="fact-value">문서 (2.8 KB)</span>
          <span>원본 위치:</span><strong class="fact-value">https://firebasestorage.googleapis.com</strong>
        </div>
        <h3 class="action">작업 선택:</h3>
        <div class="option">
          <input id="mode-open" v-model="openMode" type="radio" name="mode" value="open">
          <label for="mode-open">열기:</label>
          <span class="select">
            <select aria-label="열기"><option>Preview (기본)</option></select>
            <svg viewBox="0 0 32 40"><path d="m10 15 6-6 6 6M10 25l6 6 6-6" fill="none" stroke="#fff" stroke-width="3" stroke-linecap="round" /></svg>
          </span>
        </div>
        <div class="option">
          <input id="mode-save" v-model="openMode" type="radio" name="mode" value="save">
          <label for="mode-save">파일 저장</label>
        </div>
        <div class="dialog-actions">
          <button type="button" class="cancel">취소</button>
          <button type="submit" class="confirm">확인</button>
        </div>
      </div>
    </form>

    <footer class="dock">
      <div v-for="app in mainApps" :key="app.name" class="slot">
        <svg viewBox="0 0 68 68" v-html="app.art"></svg>
        <i v-if="app.running" class="running"></i>
        <span v-if="app.badge" class="badge">{{ app.badge }}</span>
      </div>
      <div class="dock-divider"></div>
      <div v-for="app in recentApps" :key="app.name" class="slot">
        <svg viewBox="0 0 68 68" v-html="app.art"></svg>
        <i v-if="app.running" class="running"></i>
      </div>
      <div class="dock-divider"></div>
      <div v-for="app in dockFiles" :key="app.name" class="slot">
        <svg viewBox="0 0 68 68" v-html="app.art"></svg>
      </div>
    </footer>
  </div>
</template>

<style>
body {
  margin: 0;
  background: #0a1422;
}
</style>

<style scoped>
.desktop {
  position: relative;
  min-height: 100vh;
  display: flex;
  flex-direction: column;
  overflow: hidden;
  background: #08111e;
  font-family: Inter, "Noto Sans CJK KR", sans-serif;
  font-size: 26px;
  color: #212121;
}
.desktop *,
.desktop *::before,
.desktop *::after { box-sizing: border-box; }
.defs { position: absolute; }
svg { display: block; flex: none; overflow: visible; }
button {
  border: 0;
  padding: 0;
  background: none;
  color: inherit;
  font: inherit;
}
a { color: inherit; text-decoration: none; }

/* Menu bar */
.menubar {
  height: 44px;
  display: flex;
  justify-content: space-between;
  align-items: center;
  padding: 0 46px 0 42px;
  background: linear-gradient(90deg, #1e2941, #181c2b 75%);
  color: #fff;
}
.menu-left, .menu-right { display: flex; align-items: center; }
.menu-left { gap: 40px; font-size: 26px; }
.menu-left strong { font-weight: 700; }
.apple { width: 26px; height: 32px; }
.input-source {
  width: 32px;
  height: 32px;
  border-radius: 4px;
  background: #fff;
  color: #181c2b;
  font-size: 24px;
  line-height: 32px;
  text-align: center;
}
.wifi { width: 40px; height: 30px; margin-left: 31px; }
.percent { margin-left: 24px; font-size: 24px; }
.battery { width: 46px; height: 26px; margin-left: 10px; }
.clock { margin-left: 38px; font-size: 27px; font-weight: 500; line-height: 40px; }
.spotlight { width: 30px; height: 30px; margin-left: 46px; }
.siri { width: 32px; height: 32px; margin-left: 34px; }
.list { width: 36px; height: 20px; margin-left: 24px; }

/* Browser window */
.window {
  flex: 1;
  display: flex;
  flex-direction: column;
  margin: 2px 0;
  border-radius: 10px;
  overflow: hidden;
}
.tabstrip {
  height: 66px;
  display: flex;
  background: #0c0c0d;
  border-top: 2px solid #6d6d6d;
}
.lights {
  display: flex;
  align-items: center;
  gap: 16px;
  width: 211px;
  padding-left: 26px;
}
.lights i { width: 24px; height: 24px; border-radius: 50%; background: #dedede; }
.browser-tab {
  display: flex;
  align-items: center;
  width: 452px;
  padding: 0 24px;
  border-right: 2px solid #4a4a4c;
  color: #b4b4b6;
  font-size: 22px;
}
.browser-tab.current {
  width: 449px;
  margin-top: -2px;
  border-top: 4px solid #0a84ff;
  border-right: 0;
  background: #323234;
  color: #f9f9fa;
}
.favicon { width: 24px; height: 32px; margin-right: 16px; }
.tab-title { flex: 1; overflow: hidden; white-space: nowrap; }
.current .tab-title {
  -webkit-mask-image: linear-gradient(90deg, #000 85%, transparent);
  mask-image: linear-gradient(90deg, #000 85%, transparent);
}
.tab-close { margin-left: 12px; }
.tab-close svg { width: 18px; height: 18px; fill: none; stroke: #f9f9fa; stroke-width: 3; }
.new-tab { padding: 0 18px; }
.new-tab svg { width: 28px; height: 28px; fill: none; stroke: #6e6e70; stroke-width: 3; }

.toolbar {
  height: 82px;
  display: flex;
  align-items: center;
  background: #323234;
  border-bottom: 2px solid #0c0c0d;
}
.nav-buttons { display: flex; align-items: center; gap: 1px; width: 500px; padding-left: 8px; }
.nav-buttons button, .tool-buttons button {
  width: 64px;
  height: 64px;
  display: grid;
  place-items: center;
}
.nav-buttons .back { border-radius: 50%; background: #4a4a4a; border: 2px solid #2a2a2b; }
.nav-buttons svg, .tool-buttons svg {
  width: 32px;
  height: 32px;
  fill: none;
  stroke: #828284;
  stroke-width: 4;
  stroke-linecap: round;
  stroke-linejoin: round;
}
.tool-buttons .face { stroke: none; }
.nav-buttons .solid, .tool-buttons .solid { fill: #828284; stroke: none; }
.urlbar {
  flex: 1;
  height: 60px;
  display: flex;
  align-items: center;
  padding: 0 12px 0 16px;
  border: 2px solid #5a5a5c;
  border-radius: 6px;
  background: #474749;
}
.shield, .lock { width: 26px; height: 30px; }
.url-divider { width: 2px; height: 42px; margin: 0 14px 0 15px; background: #606062; }
.url { flex: 1; margin-left: 20px; font-size: 27px; line-height: 40px; color: #9d9d9f; white-space: nowrap; }
.url b { font-weight: 400; color: #f9f9fa; }
.url-icon { width: 34px; height: 32px; margin-left: 22px; }
.tool-buttons { display: flex; align-items: center; padding: 0 6px 0 234px; }
.tool-divider { width: 2px; height: 68px; margin: 0 10px 0 6px; background: #59595b; }

/* Sidebar */
.page {
  flex: 1;
  display: flex;
  background: linear-gradient(0deg, #e5e6e8, #f6f7f9 60px);
  font-family: Roboto, "Noto Sans CJK KR", sans-serif;
}
.sidebar {
  width: 512px;
  flex: none;
  display: flex;
  flex-direction: column;
  background: #051e34;
  color: #b7bfc8;
  font-size: 28px;
  font-weight: 500;
}
.icon { width: 40px; height: 40px; fill: currentColor; }
.brand {
  height: 96px;
  display: flex;
  align-items: center;
  gap: 30px;
  padding-left: 49px;
  border-bottom: 2px solid #1e4263;
  font-family: Inter, sans-serif;
  font-size: 40px;
  font-weight: 400;
  color: #fff;
}
.brand-logo { width: 38px; height: 52px; }
.overview {
  height: 112px;
  display: flex;
  align-items: center;
  border-bottom: 2px solid #1e4263;
  font-size: 26px;
  font-weight: 400;
}
.overview a { flex: 1; display: flex; align-items: center; gap: 32px; padding-left: 48px; }
.settings { display: grid; place-items: center; width: 90px; height: 72px; border-left: 2px solid #1e4263; }
.develop { padding-top: 40px; height: 542px; background: #12283e; border-bottom: 2px solid #254a6d; }
.develop h2 {
  margin: 0 0 36px;
  padding-left: 48px;
  font-size: 28px;
  line-height: 40px;
  font-weight: 500;
  color: #fff;
}
.develop a { height: 64px; padding-left: 48px; display: flex; align-items: center; gap: 32px; }
.develop .active { color: #62b5f8; }
.products { position: relative; flex: 1; }
.backdrop { position: absolute; inset: 0; width: 100%; height: 100%; }
.product {
  position: relative;
  height: 158px;
  display: flex;
  flex-direction: column;
  justify-content: center;
  padding: 2px 48px 0;
  border-bottom: 2px solid #173756;
  white-space: nowrap;
}
.product strong { font-size: 28px; line-height: 44px; font-weight: 500; color: #fff; }
.product span { font-size: 24px; line-height: 40px; font-weight: 400; color: #828f9b; }
.extensions {
  height: 112px;
  display: flex;
  align-items: center;
  gap: 32px;
  padding-left: 48px;
  border-top: 2px solid #1e4263;
}
.plan {
  height: 120px;
  display: flex;
  align-items: center;
  justify-content: space-between;
  padding: 2px 48px 0;
  border: solid #1e4263;
  border-width: 2px 0;
}
.plan strong, .plan span { display: block; line-height: 36px; }
.plan strong { font-weight: 500; }
.plan span { font-size: 23px; font-weight: 400; }
.plan button { font-size: 24px; line-height: 36px; color: #fff; }
.collapse { height: 90px; display: flex; align-items: center; justify-content: flex-end; padding-right: 60px; }
.collapse svg { width: 16px; height: 24px; }

/* Console page */
.content { flex: 1; min-width: 0; padding: 16px 48px 0 44px; }
.topbar { display: flex; justify-content: space-between; align-items: center; height: 64px; padding: 0 4px; color: #476282; }
.project { display: flex; align-items: center; gap: 16px; font-size: 28px; font-weight: 500; }
.project svg { width: 20px; height: 10px; }
.account { display: flex; align-items: center; }
.bell { width: 32px; height: 40px; margin: 0 40px; }
.avatar { width: 64px; height: 64px; overflow: hidden; border-radius: 50%; }
.title-row { display: flex; justify-content: space-between; align-items: center; height: 122px; padding: 0 12px 0 2px; }
h1 { margin: 0; font-family: Inter, sans-serif; font-size: 62px; font-weight: 500; line-height: 80px; color: #1b3a57; }
.help {
  width: 40px;
  height: 40px;
  border-radius: 50%;
  background: #476282;
  color: #fff;
  font-size: 32px;
  font-weight: 500;
  line-height: 40px;
  text-align: center;
}
.page-tabs { display: flex; gap: 52px; height: 74px; border-bottom: 2px solid #c3cfdd; }
.page-tabs button {
  position: relative;
  padding: 0 6px 4px;
  font-size: 28px;
  font-weight: 500;
  color: #476282;
}
.page-tabs .selected { color: #1a73e8; }
.page-tabs .selected::after {
  content: "";
  position: absolute;
  inset: auto 0 -2px;
  height: 6px;
  border-radius: 6px 6px 0 0;
  background: #1a73e8;
}

.card {
  margin: 96px 120px 0 124px;
  border-radius: 16px;
  overflow: hidden;
  background: #fafafa;
  box-shadow: 0 2px 4px rgba(0, 0, 0, .3), 0 0 6px rgba(0, 0, 0, .12);
}
.card-head {
  height: 114px;
  display: flex;
  align-items: center;
  padding: 0 36px 0 44px;
  border-bottom: 2px solid #dedede;
  color: #757575;
}
.link-icon { width: 40px; height: 20px; }
.bucket { flex: 1; margin-left: 32px; font-size: 28px; }
.upload {
  width: 240px;
  height: 72px;
  display: flex;
  align-items: center;
  justify-content: center;
  gap: 10px;
  padding: 0 0 2px 8px;
  border-radius: 16px;
  background: #1a73e8;
  color: #fff;
  font-size: 26px;
}
.upload svg { width: 28px; height: 34px; }
.plain { color: #757575; }
.folder-plus { width: 40px; height: 32px; margin: 0 56px 0 36px; }
.dots { width: 8px; height: 32px; }
.card-body { display: flex; }
.listing { flex: 1; background: #fff; }
table { width: 100%; table-layout: fixed; border-collapse: separate; border-spacing: 0; }
.c-check { width: 144px; }
.c-mid { width: 256px; }
.c-date { width: 296px; }
th, td { padding: 0; text-align: left; background: #fafafa; font-weight: 400; }
th { height: 64px; padding-bottom: 2px; border-bottom: 2px solid #dedede; font-size: 23px; line-height: 32px; color: #616161; }
td { height: 112px; padding-right: 20px; font-size: 26px; line-height: 40px; color: #757575; }
td:first-child { padding-bottom: 6px; }
td.name { color: #212121; }
.name span { display: flex; align-items: center; gap: 8px; }
.file-icon { width: 48px; height: 48px; color: #757575; }
.listing input {
  display: block;
  appearance: none;
  width: 32px;
  height: 32px;
  margin: 0 0 0 48px;
  border: 4px solid #757575;
  border-radius: 4px;
}
.detail { width: 602px; border-left: 2px solid #dedede; }
.detail-title { display: flex; align-items: center; height: 64px; margin: 40px 58px 58px 48px; }
.detail-title h2 { flex: 1; margin: 0 0 0 16px; font-size: 38px; font-weight: 400; line-height: 64px; }
.close { width: 28px; height: 28px; }
dl { margin: 0 48px; }
dl div { height: 98px; }
dt { font-size: 24px; line-height: 34px; color: #9e9e9e; }
dd { margin: 0; font-size: 26px; line-height: 34px; }
.file-link { display: flex; align-items: center; gap: 10px; color: #1a73e8; }
.file-link a { text-decoration: underline; text-decoration-thickness: 2px; text-underline-offset: 4px; }
.file-link svg { width: 24px; height: 24px; }
.expander {
  width: 100%;
  height: 96px;
  display: flex;
  align-items: center;
  justify-content: space-between;
  padding: 0 44px 6px 48px;
  border-top: 2px solid #dedede;
  font-size: 24px;
  color: #757575;
}
.expander svg { width: 24px; height: 16px; margin-top: 16px; }

/* Download dialog */
.dialog {
  position: absolute;
  left: 1824px;
  top: 846px;
  width: 748px;
  border-radius: 10px;
  background: #ececec;
  box-shadow: 0 0 2px rgba(0, 0, 0, .6), 0 36px 80px rgba(0, 0, 0, .5);
  color: #000;
  font-size: 25px;
}
.dialog-bar {
  position: relative;
  height: 44px;
  display: flex;
  align-items: center;
  justify-content: center;
  border-bottom: 2px solid #b4b4b4;
  border-radius: 10px 10px 0 0;
  background: linear-gradient(#ebebeb, #d3d3d3);
  color: #4b4b4b;
}
.dialog-lights { position: absolute; left: 16px; display: flex; gap: 16px; }
.dialog-lights i { width: 24px; height: 24px; border-radius: 50%; border: 1px solid #bcbcbc; background: #d0d0d0; }
.dialog-lights .red { border-color: #e0554b; background: #ee6a5f; }
.dialog-body { padding: 30px 33px 36px 40px; }
h3 { margin: 0; font-size: 25px; line-height: 36px; font-weight: 700; }
.dialog-file { display: flex; align-items: center; gap: 10px; height: 40px; margin: 14px 0 12px -8px; }
.dialog-file svg { width: 24px; height: 34px; }
.facts {
  display: grid;
  grid-template-columns: 107px 1fr;
  column-gap: 8px;
  padding-left: 26px;
  line-height: 38px;
  white-space: nowrap;
}
.fact-value { font-size: 26px; }
h3.action { margin: 50px 0 14px; }
.option { display: flex; align-items: center; height: 40px; }
.option + .option { margin-top: 16px; }
.option input {
  appearance: none;
  width: 32px;
  height: 32px;
  margin: 0 6px 0 -4px;
  border: 1px solid #b5b5b5;
  border-radius: 50%;
  background: #fff;
}
.option input:checked {
  border-color: #2a6fe6;
  background: radial-gradient(circle, #fff 5px, #3a86fb 6px);
  box-shadow: 0 0 0 6px #77aef5;
}
.select { position: relative; flex: 1; margin-left: 6px; }
.select select {
  appearance: none;
  display: block;
  width: 100%;
  height: 40px;
  padding: 0 17px;
  border: 1px solid #c4c4c4;
  border-radius: 8px;
  background: #fff;
  font: inherit;
  color: #000;
}
.select svg {
  position: absolute;
  right: 0;
  top: 0;
  width: 32px;
  height: 40px;
  border-radius: 0 8px 8px 0;
  background: linear-gradient(#6aa5fb, #0a68fd);
  pointer-events: none;
}
.dialog-actions { display: flex; justify-content: flex-end; gap: 28px; margin-top: 88px; padding-right: 8px; }
.dialog-actions button { height: 40px; border-radius: 8px; line-height: 38px; }
.cancel { width: 152px; border: 1px solid #c4c4c4; background: #fff; }
.confirm { width: 156px; background: linear-gradient(#6aa5fb, #0a68fd); color: #fff; }

/* Dock */
.dock {
  height: 98px;
  display: flex;
  margin: 2px 63px 0 62px;
  padding: 0 3px;
  border: 2px solid #414955;
  border-bottom: 0;
  border-radius: 12px 12px 0 0;
  background: #18202e;
}
.slot { position: relative; flex: 1; display: flex; justify-content: center; padding-top: 10px; }
.slot svg { width: 68px; height: 68px; font-family: Inter, "Noto Sans CJK KR", sans-serif; }
.running {
  position: absolute;
  left: 50%;
  bottom: 4px;
  width: 8px;
  height: 8px;
  margin-left: -4px;
  border-radius: 50%;
  background: #9aa2ac;
}
.badge {
  position: absolute;
  top: 6px;
  right: 2px;
  width: 28px;
  height: 28px;
  border-radius: 50%;
  background: #e0483e;
  color: #fff;
  font-size: 18px;
  line-height: 28px;
  text-align: center;
}
.dock-divider { width: 36px; display: flex; justify-content: center; }
.dock-divider::after { content: ""; width: 2px; height: 70px; margin-top: 12px; background: #4c5462; }
</style>
